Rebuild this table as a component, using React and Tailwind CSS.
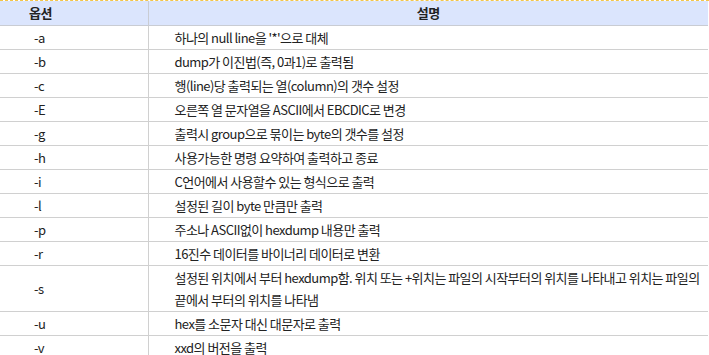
const rows = [
  ['-a', "하나의 null line을 '*'으로 대체"],
  ['-b', 'dump가 이진법(즉, 0과1)로 출력됨'],
  ['-c', '행(line)당 출력되는 열(column)의 갯수 설정'],
  ['-E', '오른쪽 열 문자열을 ASCII에서 EBCDIC로 변경'],
  ['-g', '출력시 group으로 묶이는 byte의 갯수를 설정'],
  ['-h', '사용가능한 명령 요약하여 출력하고 종료'],
  ['-i', 'C언어에서 사용할수 있는 형식으로 출력'],
  ['-l', '설정된 길이 byte 만큼만 출력'],
  ['-p', '주소나 ASCII없이 hexdump 내용만 출력'],
  ['-r', '16진수 데이터를 바이너리 데이터로 변환'],
  ['-s', '설정된 위치에서 부터 hexdump함. 위치 또는 +위치는 파일의 시작부터의 위치를 나타내고 위치는 파일의 끝에서 부터의 위치를 나타냄'],
  ['-u', 'hex를 소문자 대신 대문자로 출력'],
  ['-v', 'xxd의 버전을 출력'],
];

export default function App() {
  return (
    <div
      className="w-[709px] h-[355px] overflow-hidden bg-white text-[#222] text-[13px] tracking-[-0.55px]"
      style={{ fontFamily: '"Noto Sans CJK KR", "Noto Sans", sans-serif' }}
    >
      <div className="border-t border-dashed border-[#f3c54a]">
        <table className="w-[708px] border-collapse table-fixed">
          <thead>
            <tr className="bg-[#dbe5fd]">
              <th className="w-[148px] border-r border-b border-[#c9ccd3] text-left pl-[29px] font-bold leading-[22px] pt-[1px] h-[24px]">
                옵션
              </th>
              <th className="border-b border-[#c9ccd3] text-center font-bold leading-[22px] pt-[1px]">
                설명
              </th>
            </tr>
          </thead>
          <tbody>
            {rows.map(([opt, desc]) => (
              <tr key={opt}>
                <td className="border-r border-b border-[#d0d0d0] pl-[34px] leading-[22px] pt-[1px] align-middle">
                  {opt}
                </td>
                <td className="border-b border-[#d0d0d0] pl-[26px] pr-0 leading-[22px] pt-[1px] pb-0">
                  {desc}
                </td>
              </tr>
            ))}
          </tbody>
        </table>
      </div>
    </div>
  );
}
